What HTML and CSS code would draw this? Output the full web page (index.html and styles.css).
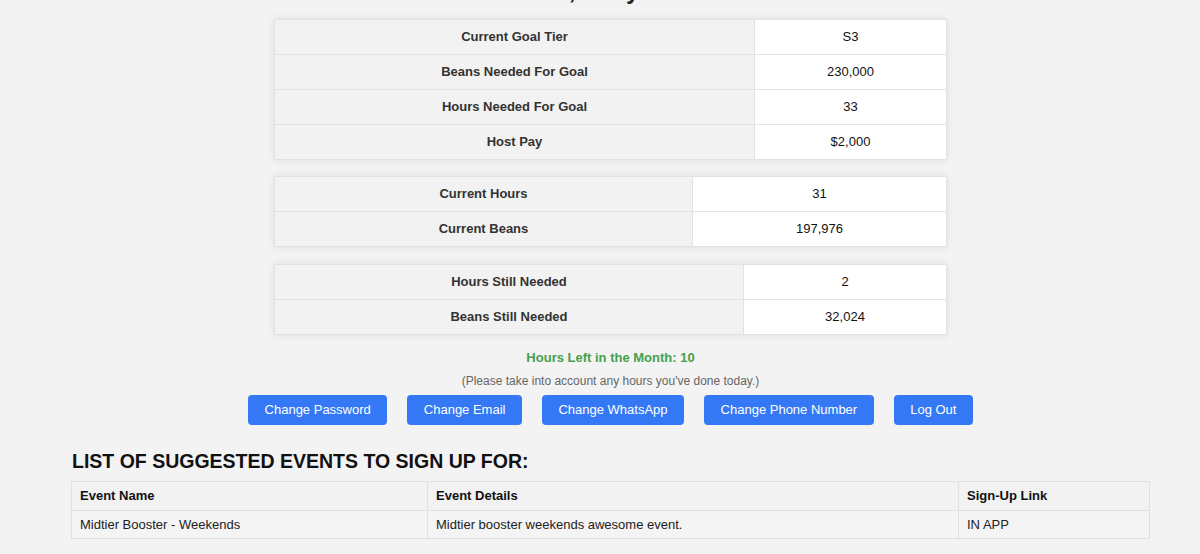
FILE: index.html
```html
<!DOCTYPE html>
<html lang="en">
<head>
<meta charset="utf-8">
<title>Host Dashboard</title>
<link rel="stylesheet" href="styles.css">
</head>
<body>
<div class="page">
  <h2 class="welcome">Welcome, Kelly Anderson</h2>

  <table class="stats t1">
    <tr><th class="label">Current Goal Tier</th><td class="value">S3</td></tr>
    <tr><th class="label">Beans Needed For Goal</th><td class="value">230,000</td></tr>
    <tr><th class="label">Hours Needed For Goal</th><td class="value">33</td></tr>
    <tr><th class="label">Host Pay</th><td class="value">$2,000</td></tr>
  </table>

  <table class="stats t2">
    <tr><th class="label">Current Hours</th><td class="value">31</td></tr>
    <tr><th class="label">Current Beans</th><td class="value">197,976</td></tr>
  </table>

  <table class="stats t3">
    <tr><th class="label">Hours Still Needed</th><td class="value">2</td></tr>
    <tr><th class="label">Beans Still Needed</th><td class="value">32,024</td></tr>
  </table>

  <p class="hours-left">Hours Left in the Month: 10</p>
  <p class="note">(Please take into account any hours you've done today.)</p>

  <div class="actions">
    <button class="btn">Change Password</button>
    <button class="btn">Change Email</button>
    <button class="btn">Change WhatsApp</button>
    <button class="btn">Change Phone Number</button>
    <button class="btn">Log Out</button>
  </div>

  <h2 class="events-title">LIST OF SUGGESTED EVENTS TO SIGN UP FOR:</h2>

  <table class="events">
    <tr>
      <th class="col-name">Event Name</th>
      <th class="col-details">Event Details</th>
      <th class="col-link">Sign-Up Link</th>
    </tr>
    <tr>
      <td>Midtier Booster - Weekends</td>
      <td>Midtier booster weekends awesome event.</td>
      <td>IN APP</td>
    </tr>
  </table>
</div>
</body>
</html>
```

FILE: styles.css
```css
html, body {
  margin: 0;
  padding: 0;
  background: #f3f3f3;
  font-family: "Liberation Sans", Arial, Helvetica, sans-serif;
  color: #222;
}

.page {
  margin: 0 50px 0 71px;
}

.welcome {
  margin: -23px 0 14px;
  font-size: 24px;
  line-height: 28px;
  font-weight: bold;
  text-align: center;
  color: #222;
}

.stats {
  width: 673px;
  margin: 0 auto 17px;
  border-collapse: collapse;
  background: #fff;
  box-shadow: 0 0 8px rgba(0, 0, 0, 0.09);
  font-size: 13px;
  line-height: 16px;
}

.stats th,
.stats td {
  border: 1px solid #e2e2e2;
  padding: 9px 10px;
  text-align: center;
}

.stats .label {
  background: #f2f2f2;
  color: #333;
  font-weight: bold;
}

.stats .value {
  background: #fff;
  color: #111;
  font-weight: normal;
}

.t1 .label { width: 459px; }
.t2 .label { width: 397px; }
.t3 .label { width: 448px; }

.stats.t1 {
  margin-bottom: 16px;
}

.stats.t3 {
  margin-bottom: 15px;
}

.hours-left {
  margin: 0 0 7px;
  text-align: center;
  font-size: 13px;
  line-height: 16px;
  font-weight: bold;
  color: #47a04b;
}

.note {
  margin: 0 0 6px;
  text-align: center;
  font-size: 12px;
  line-height: 16px;
  color: #666;
}

.actions {
  display: flex;
  justify-content: center;
  gap: 20px;
}

.btn {
  font-family: "Liberation Sans", Arial, Helvetica, sans-serif;
  font-size: 13px;
  line-height: 16px;
  padding: 7px 16.5px;
  border: 0;
  border-radius: 4px;
  background: #3478f6;
  color: #fff;
  cursor: pointer;
}

.events-title {
  margin: 24px 0 8px 1px;
  font-size: 19.5px;
  line-height: 24px;
  font-weight: bold;
  color: #111;
}

.events {
  width: 100%;
  border-collapse: collapse;
  font-size: 13px;
  line-height: 16px;
}

.events th,
.events td {
  border: 1px solid #e0e0e0;
  padding: 6px 8px;
  text-align: left;
}

.events td {
  padding: 6px 8px 5px;
}

.events th {
  background: #f2f2f2;
  font-weight: bold;
  color: #111;
}

.events td {
  background: #f4f4f4;
  color: #222;
}

.col-name { width: 339px; }
.col-details { width: 514px; }
```
